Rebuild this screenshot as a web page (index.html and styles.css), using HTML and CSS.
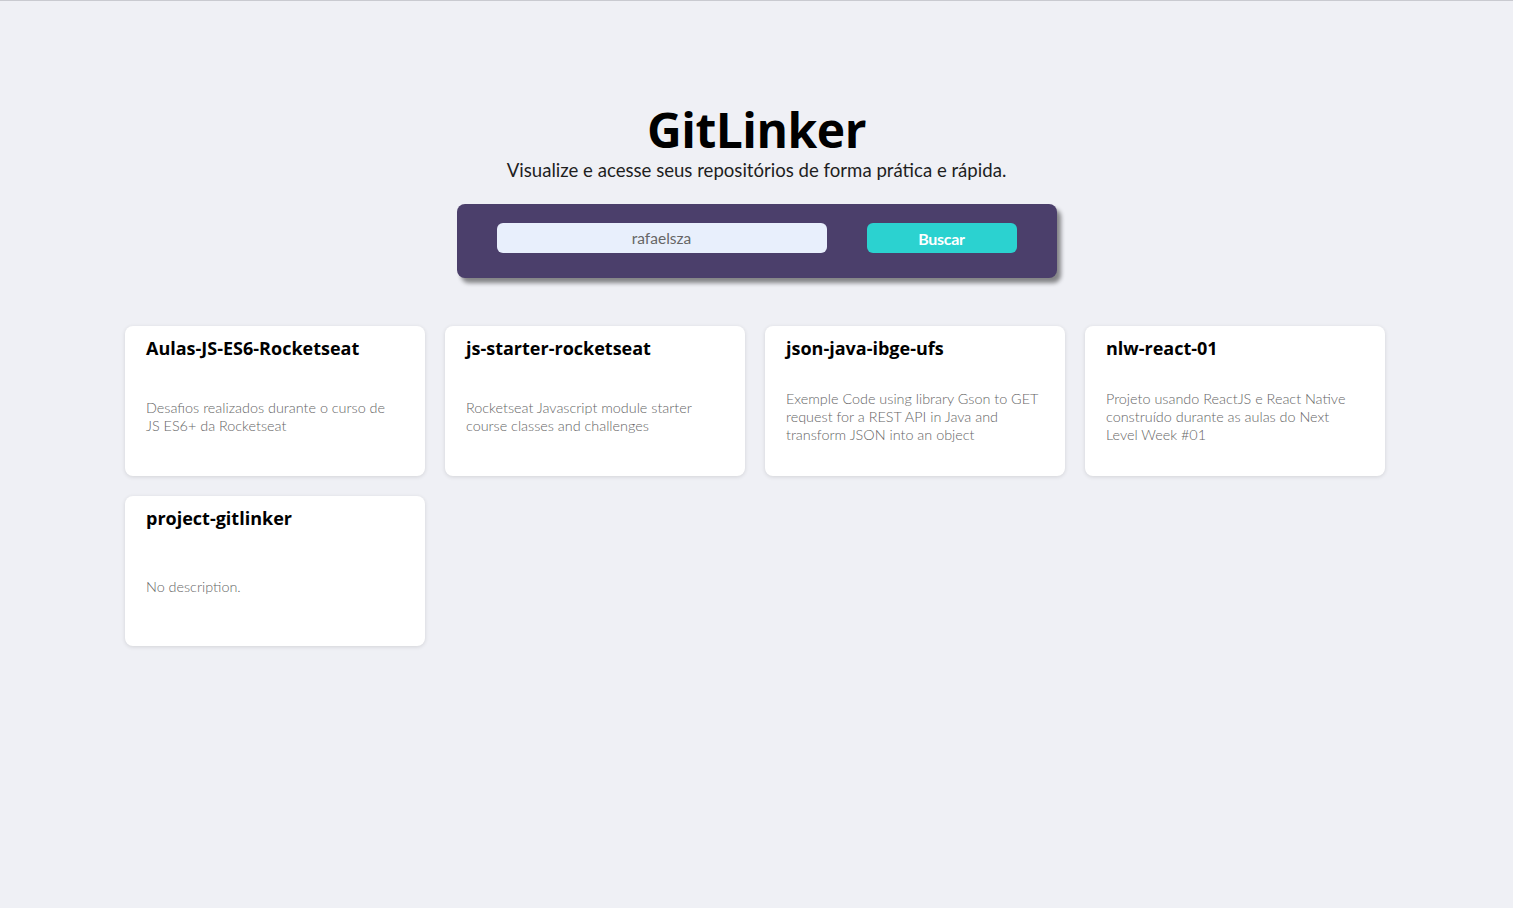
FILE: index.html
```html
<!DOCTYPE html>
<html lang="pt-BR">
<head>
<meta charset="utf-8">
<title>GitLinker</title>
<link rel="stylesheet" href="styles.css">
</head>
<body>
<div class="page">
  <header class="header">
    <h1 class="title">GitLinker</h1>
    <p class="subtitle">Visualize e acesse seus repositórios de forma prática e rápida.</p>
  </header>
  <form class="search">
    <input class="search-input" type="text" value="rafaelsza">
    <button class="search-button" type="button">Buscar</button>
  </form>
  <main class="repos">
    <div class="card">
      <h2 class="card-title">Aulas-JS-ES6-Rocketseat</h2>
      <div class="card-body"><p class="card-desc">Desafios realizados durante o curso de JS ES6+ da Rocketseat</p></div>
    </div>
    <div class="card">
      <h2 class="card-title">js-starter-rocketseat</h2>
      <div class="card-body"><p class="card-desc">Rocketseat Javascript module starter course classes and challenges</p></div>
    </div>
    <div class="card">
      <h2 class="card-title">json-java-ibge-ufs</h2>
      <div class="card-body"><p class="card-desc">Exemple Code using library Gson to GET request for a REST API in Java and transform JSON into an object</p></div>
    </div>
    <div class="card">
      <h2 class="card-title">nlw-react-01</h2>
      <div class="card-body"><p class="card-desc">Projeto usando ReactJS e React Native construído durante as aulas do Next Level Week #01</p></div>
    </div>
    <div class="card">
      <h2 class="card-title">project-gitlinker</h2>
      <div class="card-body"><p class="card-desc">No description.</p></div>
    </div>
  </main>
</div>
</body>
</html>
```

FILE: styles.css
```css
* { box-sizing: border-box; }
html, body { margin: 0; padding: 0; }
body {
  background: #eff0f5;
  border-top: 1px solid #c9cad0;
  min-height: 908px;
  font-family: "Lato", "Open Sans", sans-serif;
}
.page {
  display: flex;
  flex-direction: column;
  align-items: center;
  padding-top: 100px;
}
.header {
  display: flex;
  flex-direction: column;
  align-items: center;
}
.title {
  margin: 0;
  font-family: "Open Sans", sans-serif;
  font-weight: 700;
  font-size: 48px;
  line-height: 58px;
  color: #000;
  letter-spacing: -0.5px;
}
.subtitle {
  margin: -1px 0 0;
  font-family: "Lato", sans-serif;
  font-size: 18.6px;
  line-height: 24px;
  color: #1e1e1e;
}
.search {
  margin-top: 22px;
  width: 600px;
  height: 74px;
  background: #4b3f6b;
  border-radius: 8px;
  box-shadow: 4px 5px 4px rgba(0, 0, 0, 0.45);
  display: flex;
  align-items: flex-start;
  gap: 40px;
  padding: 19px 40px 0;
}
.search-input {
  width: 330px;
  height: 30px;
  border: none;
  border-radius: 6px;
  background: #e8effc;
  text-align: center;
  font-family: "Lato", sans-serif;
  font-size: 15.5px;
  color: #666;
  outline: none;
}
.search-button {
  width: 150px;
  height: 30px;
  border: none;
  border-radius: 6px;
  background: #2bd2d0;
  color: #fff;
  font-family: "Lato", sans-serif;
  font-weight: 700;
  font-size: 16px;
  letter-spacing: -0.3px;
}
.repos {
  margin-top: 48px;
  width: 1263px;
  display: grid;
  grid-template-columns: repeat(4, 300px);
  gap: 20px;
}
.card {
  height: 150px;
  background: #fff;
  border-radius: 8px;
  box-shadow: 0 1px 4px rgba(0, 0, 0, 0.12);
  display: flex;
  flex-direction: column;
  padding: 10px 20px 2px 21px;
}
.card-title {
  margin: 0;
  font-family: "Open Sans", sans-serif;
  font-weight: 700;
  font-size: 18px;
  line-height: 24px;
  color: #000;
}
.card-body {
  flex: 1;
  display: flex;
  align-items: center;
}
.card-desc {
  margin: 0;
  max-width: 254px;
  font-family: "Lato", sans-serif;
  font-weight: 300;
  font-size: 14.4px;
  line-height: 18px;
  color: #666;
}
```
